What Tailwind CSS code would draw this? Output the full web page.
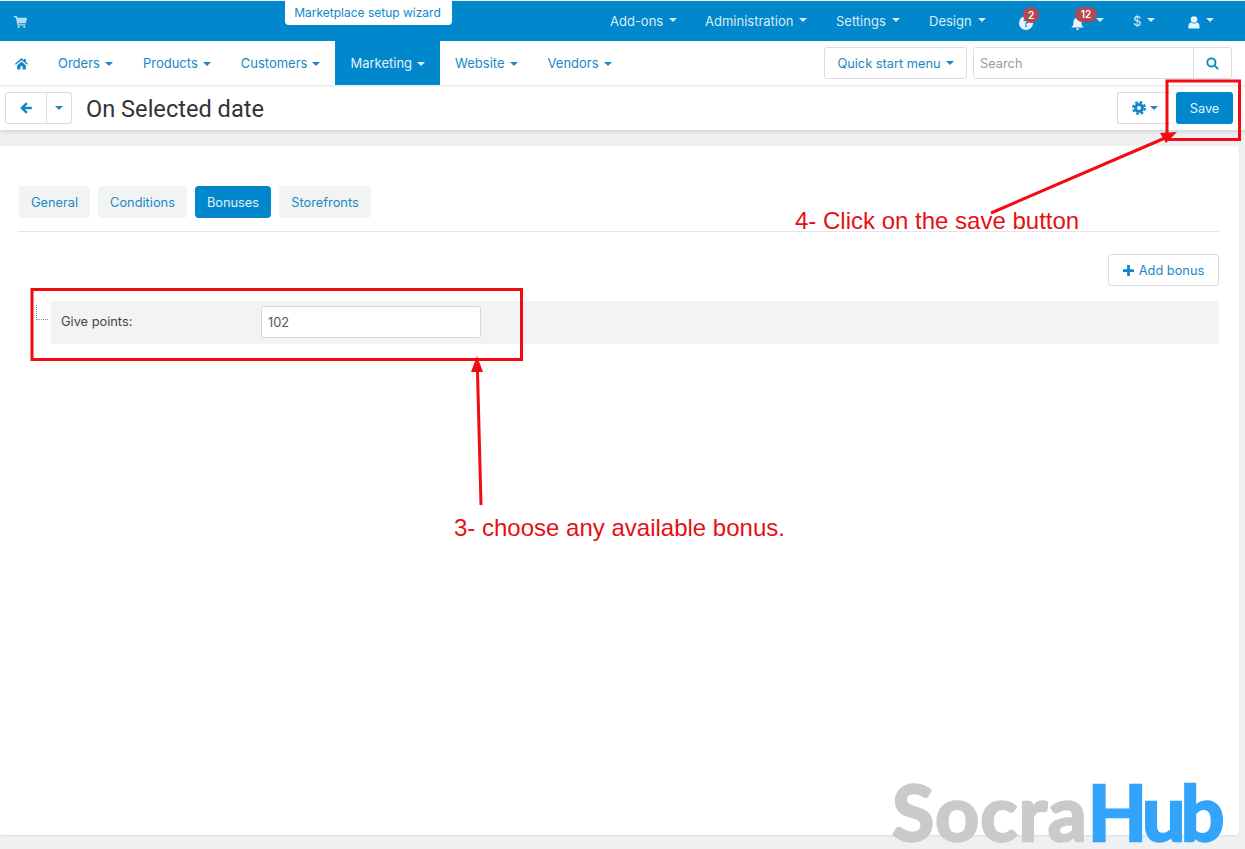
<!DOCTYPE html>
<html lang="en">
<head>
  <meta charset="UTF-8">
  <title>On Selected date</title>
  <script src="https://cdn.jsdelivr.net/npm/@tailwindcss/browser@4"></script>
</head>
<body class="relative w-[1245px] h-[849px] overflow-hidden bg-[#eef0f1] font-['Inter',sans-serif] text-[13px]">

  <!-- Top bar -->
  <header class="mt-px h-10 bg-[#0087cc] flex items-center text-[#dcedf7] pl-[14px]">
    <svg class="w-[13px] h-[13px] fill-[#b5dcf2]" viewBox="0 0 24 24"><path d="M0 2h5l1 3h18l-2 10H8l.5 2H21v2.500H6.500L3.500 4.500H0z"/><circle cx="8.500" cy="22" r="2"/><circle cx="19" cy="22" r="2"/></svg>
    <nav class="ml-[583px] pt-[2px] flex items-center">
      <a class="flex items-center gap-[6px] w-[95px]">Add-ons <i class="w-0 h-0 border-x-4 border-x-transparent border-t-4 border-t-[#dcedf7] -mt-1"></i></a>
      <a class="flex items-center gap-[6px] w-[131px]">Administration <i class="w-0 h-0 border-x-4 border-x-transparent border-t-4 border-t-[#dcedf7] -mt-1"></i></a>
      <a class="flex items-center gap-[6px] w-[93px]">Settings <i class="w-0 h-0 border-x-4 border-x-transparent border-t-4 border-t-[#dcedf7] -mt-1"></i></a>
      <a class="flex items-center gap-[6px] w-[90px]">Design <i class="w-0 h-0 border-x-4 border-x-transparent border-t-4 border-t-[#dcedf7] -mt-1"></i></a>
      <a class="relative w-[51px] h-5 flex items-center">
        <span class="w-[14px] h-[14px] mt-[2px] rounded-full bg-[#e6f3fa] text-[#0087cc] text-[11px] font-bold leading-[14px] text-center">?</span>
        <span class="absolute left-[4px] -top-[5px] w-4 h-4 rounded-full bg-[#b5474f] text-white text-[10px] font-semibold leading-4 text-center">2</span>
      </a>
      <a class="relative w-[63px] h-5 flex items-center gap-[2px]">
        <svg class="w-[15px] h-[15px] mt-[2px] fill-[#e6f3fa]" viewBox="0 0 24 24"><path d="M12 1a2 2 0 0 1 2 2c3.500 1 4.500 4 4.500 7.500 0 4 1 6 3.500 8H2c2.500-2 3.500-4 3.500-8C5.500 7 6.500 4 10 3a2 2 0 0 1 2-2zM9.500 20h5a2.500 2.500 0 0 1-5 0z"/></svg>
        <i class="ml-[9px] -mt-1 w-0 h-0 border-x-4 border-x-transparent border-t-4 border-t-[#dcedf7]"></i>
        <span class="absolute left-[5px] -top-[5px] w-[22px] h-[15px] rounded-full bg-[#b5474f] text-white text-[10px] font-semibold leading-[15px] text-center">12</span>
      </a>
      <a class="flex items-center gap-[6px] w-[55px]">$ <i class="w-0 h-0 border-x-4 border-x-transparent border-t-4 border-t-[#dcedf7] -mt-1"></i></a>
      <a class="flex items-center gap-[6px]">
        <svg class="w-3 h-[13px] fill-[#e6f3fa]" viewBox="0 0 24 26"><circle cx="12" cy="7" r="6.500"/><path d="M1 25c-1-8 2-12 5-12 2 1.500 4 2 6 2s4-.5 6-2c3 0 6 4 5 12z"/></svg>
        <i class="w-0 h-0 border-x-4 border-x-transparent border-t-4 border-t-[#dcedf7] -mt-1"></i>
      </a>
    </nav>
  </header>

  <!-- Wizard tab -->
  <a class="absolute left-[285px] top-0 w-[167px] h-[25px] pr-[2px] bg-white rounded-b-[4px] text-[#0f87c9] text-[12px] leading-[26px] text-center">Marketplace setup wizard</a>

  <!-- Main nav -->
  <div class="h-11 bg-white flex items-stretch text-[#1a87c6] text-[13px]">
    <a class="w-[43px] flex items-center pl-[15px]">
      <svg class="w-[13px] h-[13px] fill-[#0f87c9]" viewBox="0 0 24 24"><path d="M12 2 0 12.500 1.500 14.500 12 5.500l10.500 9L24 12.500l-4-3.500V3.500h-3.500V6zM4 15.500 12 8.500l8 7V23h-6v-6h-4v6H4z"/></svg>
    </a>
    <a class="px-[15px] pt-[2px] flex items-center gap-[5px]">Orders <i class="w-0 h-0 border-x-4 border-x-transparent border-t-4 border-t-[#1a87c6]"></i></a>
    <a class="px-[15px] pt-[2px] flex items-center gap-[5px]">Products <i class="w-0 h-0 border-x-4 border-x-transparent border-t-4 border-t-[#1a87c6]"></i></a>
    <a class="px-[15px] pt-[2px] flex items-center gap-[5px]">Customers <i class="w-0 h-0 border-x-4 border-x-transparent border-t-4 border-t-[#1a87c6]"></i></a>
    <a class="px-[15px] pt-[2px] flex items-center gap-[5px] bg-[#0087cc] text-[#e3f1f9]">Marketing <i class="w-0 h-0 border-x-4 border-x-transparent border-t-4 border-t-[#e3f1f9]"></i></a>
    <a class="px-[15px] pt-[2px] flex items-center gap-[5px]">Website <i class="w-0 h-0 border-x-4 border-x-transparent border-t-4 border-t-[#1a87c6]"></i></a>
    <a class="px-[15px] pt-[2px] flex items-center gap-[5px]">Vendors <i class="w-0 h-0 border-x-4 border-x-transparent border-t-4 border-t-[#1a87c6]"></i></a>
    <div class="ml-auto mr-[13px] flex items-center gap-[6px] text-[12.800px]">
      <button class="w-[143px] h-8 pt-[2px] border border-[#d9dde0] rounded-[3px] flex items-center justify-center gap-[5px] text-[#1a87c6]">Quick start menu <i class="w-0 h-0 border-x-4 border-x-transparent border-t-4 border-t-[#1a87c6] -mt-[2px]"></i></button>
      <div class="w-[259px] h-8 border border-[#d9dde0] rounded-[3px] flex items-center">
        <span class="flex-1 pl-[6px] pt-[2px] text-[#9a9a9a]">Search</span>
        <span class="w-[38px] h-full border-l border-[#d9dde0] flex items-center justify-center">
          <svg class="w-[13px] h-[13px] stroke-[#0f87c9] fill-none" stroke-width="3.500" viewBox="0 0 24 24"><circle cx="10" cy="10" r="7.500"/><path d="m15.500 15.500 7 7"/></svg>
        </span>
      </div>
    </div>
  </div>

  <!-- Toolbar -->
  <div class="mt-px h-[44px] bg-white border-t border-[#f0f1f2] shadow-[0_2px_4px_rgba(0,0,0,0.12)] flex items-center pl-[5px] pr-3 relative">
    <div class="w-[67px] h-8 -mt-px border border-[#d9dde0] rounded-[3px] flex">
      <span class="w-[41px] border-r border-[#d9dde0] flex items-center justify-center">
        <svg class="w-[14px] h-[14px] fill-[#0f87c9]" viewBox="0 0 24 24"><path d="M12 2 2 12l10 10 3-3-5-5h12v-4H10l5-5z"/></svg>
      </span>
      <span class="flex-1 flex items-center justify-center"><i class="w-0 h-0 border-x-4 border-x-transparent border-t-4 border-t-[#1a87c6]"></i></span>
    </div>
    <h1 class="ml-[14px] pt-[2px] font-['Roboto',sans-serif] text-[23.600px] text-[#333] leading-none">On Selected date</h1>
    <div class="ml-auto -mt-px flex items-center">
      <button class="w-[54px] h-8 border border-r-0 border-[#d9dde0] rounded-l-[3px] flex items-center pl-[14px] gap-[4px]">
        <svg class="w-[14px] h-[14px]" viewBox="0 0 24 24"><circle cx="12" cy="12" r="8.500" fill="#0f87c9"/><circle cx="12" cy="12" r="10" fill="none" stroke="#0f87c9" stroke-width="4" stroke-dasharray="4.500 3.350"/><circle cx="12" cy="12" r="3.500" fill="#fff"/></svg>
        <i class="w-0 h-0 border-x-4 border-x-transparent border-t-4 border-t-[#1a87c6]"></i>
      </button>
      <button class="ml-[5px] w-[57px] h-8 pt-[2px] bg-[#0087cc] rounded-[3px] text-[#e3f1f9] text-[12.800px]">Save</button>
    </div>
  </div>

  <!-- Content card -->
  <main class="mt-4 w-[1239px] h-[689px] bg-white rounded-r-[3px] shadow-[0_1px_2px_rgba(0,0,0,0.08)] pl-[18px] pr-5 pt-10 text-[12.800px]">
    <div class="flex gap-2 pl-px pb-[13px] border-b border-[#e3e6e8] text-[#1a87c6]">
      <a class="w-[71px] h-8 pt-px bg-[#f2f4f4] rounded-[4px] leading-8 text-center">General</a>
      <a class="w-[89px] h-8 pt-px bg-[#f2f4f4] rounded-[4px] leading-8 text-center">Conditions</a>
      <a class="w-[76px] h-8 pt-px bg-[#0087cc] rounded-[4px] leading-8 text-center text-[#e3f1f9]">Bonuses</a>
      <a class="w-[92px] h-8 pt-px bg-[#f2f4f4] rounded-[4px] leading-8 text-center">Storefronts</a>
    </div>
    <div class="mt-[22px] flex justify-end">
      <button class="w-[111px] h-8 pt-[2px] border border-[#d9dde0] rounded-[3px] flex items-center justify-center gap-[5px] text-[#1a87c6]">
        <svg class="w-[11px] h-[11px] -mt-[2px] fill-[#0f87c9]" viewBox="0 0 12 12"><path d="M4.500 0h3v4.500H12v3H7.500V12h-3V7.500H0v-3h4.500z"/></svg>
        Add bonus
      </button>
    </div>
    <div class="mt-[15px] flex items-start">
      <div class="mt-1 ml-[18px] w-[12px] h-[15px] border-l border-b border-dotted border-[#8a8a8a] shrink-0"></div>
      <div class="ml-[3px] flex-1 h-[43px] bg-[#f3f3f4] rounded-[2px] flex items-start pt-[5px] pl-[10px] text-[#444]">
        <label class="w-[200px] leading-[32px]">Give points:</label>
        <div class="w-[220px] h-8 bg-white border border-[#d4d7d9] rounded-[3px] pl-[6px] leading-[32px] text-[#555]">102</div>
      </div>
    </div>
  </main>

  <!-- Annotations drawn on top of the screenshot -->
  <svg class="absolute inset-0 w-[1245px] h-[849px] pointer-events-none" viewBox="0 0 1245 849">
    <rect x="32" y="289.500" width="489.500" height="70" fill="none" stroke="#f40a12" stroke-width="3"/>
    <rect x="1167" y="81" width="72.500" height="58.500" fill="none" stroke="#f40a12" stroke-width="3"/>
    <path d="M481 505 477.500 372" stroke="#f40a12" stroke-width="3" fill="none"/>
    <path d="M477 356 471 372H483z" fill="#f40a12"/>
    <path d="M991 213 1165 138" stroke="#f40a12" stroke-width="3" fill="none"/>
    <path d="M1177 132 1160 133 1166 143z" fill="#f40a12"/>
  </svg>
  <p class="absolute left-[795px] top-[207px] text-[24px] leading-7 text-[#e60f14] font-['Liberation_Sans',sans-serif]">4- Click on the save button</p>
  <p class="absolute left-[454px] top-[514px] text-[24px] leading-7 text-[#e60f14] font-['Liberation_Sans',sans-serif]">3- choose any available bonus.</p>

  <!-- Watermark -->
  <div class="absolute left-[892px] top-[773px] text-[77px] leading-[76px] font-bold tracking-[1px] font-['Lato',sans-serif] text-[#cacaca] [-webkit-text-stroke:2.500px_#cacaca] whitespace-nowrap">Socra<span class="tracking-[-4.500px] text-[#33a4fb] [-webkit-text-stroke:2.500px_#33a4fb]">Hub</span></div>
</body>
</html>
